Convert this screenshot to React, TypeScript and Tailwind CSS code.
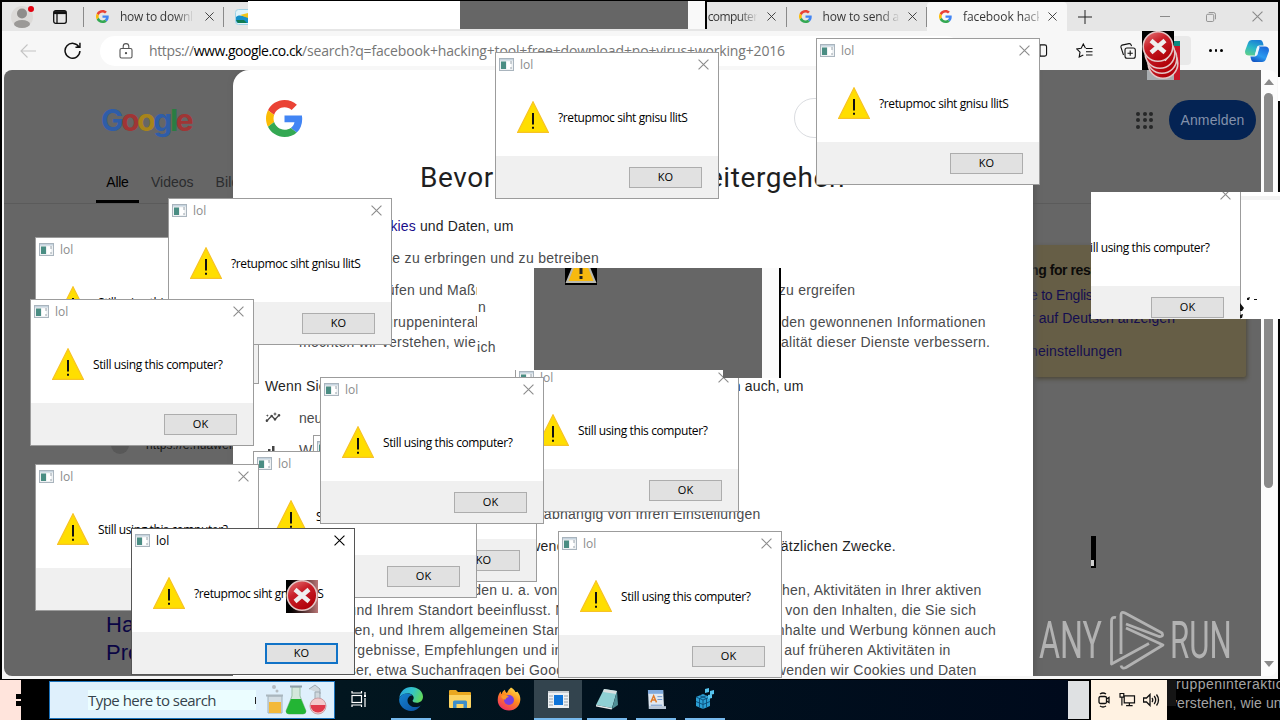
import { useLayoutEffect, useRef, type ReactNode } from 'react';
import clsx from 'clsx';

interface FitProps {
  w: number;
  className?: string;
  children: ReactNode;
}

// Spreads the letters so that a line takes exactly w pixels
function Fit({ w, className, children }: FitProps) {
  const ref = useRef<HTMLSpanElement>(null);

  useLayoutEffect(() => {
    const el = ref.current;
    if (!el) return;
    el.style.letterSpacing = '0px';
    const chars = (el.textContent || '').length || 1;
    el.style.letterSpacing = `${(w - el.offsetWidth) / chars}px`;
  }, [w]);

  return (
    <span ref={ref} className={clsx('inline-block shrink-0 whitespace-pre', className)}>
      {children}
    </span>
  );
}

function GoogleG({ className }: { className: string }) {
  return (
    <svg viewBox="0 0 48 48" className={clsx('shrink-0', className)}>
      <path fill="#EA4335" d="M24 9.5c3.54 0 6.71 1.22 9.21 3.6l6.85-6.85C35.9 2.38 30.47 0 24 0 14.62 0 6.51 5.38 2.56 13.22l7.98 6.19C12.43 13.72 17.74 9.5 24 9.5z" />
      <path fill="#4285F4" d="M46.98 24.55c0-1.57-.15-3.09-.38-4.55H24v9.02h12.94c-.58 2.96-2.26 5.48-4.78 7.18l7.73 6c4.51-4.18 7.09-10.36 7.09-17.65z" />
      <path fill="#FBBC05" d="M10.53 28.59c-.48-1.45-.76-2.99-.76-4.59s.27-3.14.76-4.59l-7.98-6.19C.92 16.46 0 20.12 0 24c0 3.88.92 7.54 2.56 10.78l7.97-6.19z" />
      <path fill="#34A853" d="M24 48c6.48 0 11.93-2.13 15.89-5.81l-7.73-6c-2.15 1.45-4.92 2.3-8.16 2.3-6.26 0-11.57-4.22-13.47-9.91l-7.98 6.19C6.51 42.62 14.62 48 24 48z" />
    </svg>
  );
}

function Cross({ className }: { className: string }) {
  return (
    <svg viewBox="0 0 10 10" className={clsx('shrink-0', className)} fill="none" stroke="currentColor">
      <path d="M0.5 0.5L9.5 9.5M9.5 0.5L0.5 9.5" />
    </svg>
  );
}

function ErrorIcon({ className }: { className?: string }) {
  return (
    <svg viewBox="0 0 32 32" className={clsx('h-8 w-8', className)}>
      <defs>
        <linearGradient id="err" x1="0" y1="0" x2="0.6" y2="1">
          <stop offset="0" stopColor="#e88080" />
          <stop offset="0.45" stopColor="#c9202a" />
          <stop offset="1" stopColor="#b00008" />
        </linearGradient>
      </defs>
      <circle cx="16" cy="15.5" r="14.8" fill="url(#err)" stroke="#e3c6c6" strokeWidth="1.6" />
      <path d="M9 9.500l14 12M23 9.500l-14 12" stroke="#efefef" strokeWidth="4.500" />
    </svg>
  );
}

function AppIcon() {
  return (
    <svg viewBox="0 0 15 13" className="mb-px h-[13px] w-[15px] shrink-0">
      <rect x="0.5" y="0.5" width="14" height="12" fill="#eef1f3" stroke="#a9b4bd" />
      <rect x="1" y="1" width="13" height="1.5" fill="#c5d3de" />
      <rect x="2" y="3.5" width="5" height="7.5" fill="#4a8d83" />
      <rect x="8" y="3.5" width="4" height="7.5" fill="#fff" />
      <path d="M12 3v3M12 9v2" stroke="#9aa5ad" />
    </svg>
  );
}

function WarnTriangle() {
  return (
    <svg viewBox="0 0 32 32" className="mb-[3px] h-8 w-8 shrink-0">
      <path d="M16 0.8L31.4 31.4H0.6z" fill="#ffde00" stroke="#f7c325" strokeWidth="1.2" />
      <path d="M16 12v11.5M16 25.7v2.1" stroke="#111" strokeWidth="2" />
    </svg>
  );
}

interface DialogProps {
  at: string;
  mirrored?: boolean;
  active?: boolean;
}

function Dialog({ at, mirrored, active }: DialogProps) {
  return (
    <div
      className={clsx(
        'absolute flex h-[147px] w-[224px] flex-col border bg-white font-["Open_Sans",sans-serif] text-[12px] text-black',
        active ? 'border-[#555]' : 'border-[#9c9c9c]',
        at,
      )}
    >
      <div className="flex h-[24px] shrink-0 items-center pl-[3px] pr-[9px]">
        <AppIcon />
        <Fit w={13} className={clsx('ml-[6px] leading-none', active ? 'text-black' : 'text-[#8c8c8c]')}>lol</Fit>
        <Cross className={clsx('mb-px ml-auto h-[11px] w-[11px]', active ? 'text-black' : 'text-[#8c8c8c]')} />
      </div>
      <div className="flex h-[79px] shrink-0 items-center pl-[21px] pt-[3px]">
        <WarnTriangle />
        <Fit w={130} className="ml-[9px] leading-none">
          {mirrored ? '?retupmoc siht gnisu llitS' : 'Still using this computer?'}
        </Fit>
      </div>
      <div className="flex flex-1 items-start justify-end bg-[#f0f0f0] pr-[16px] pt-[11px]">
        <div
          className={clsx(
            'flex h-[21px] w-[73px] items-center justify-center bg-[#e1e1e1] text-[11px]',
            active ? 'border-2 border-[#1173c7]' : 'border border-[#adadad]',
          )}
        >
          {mirrored ? 'KO' : 'OK'}
        </div>
      </div>
    </div>
  );
}

interface TabProps {
  title: string;
  w: number;
  active?: boolean;
}

function Tab({ title, w, active }: TabProps) {
  return (
    <div
      className={clsx(
        'flex h-[29px] w-[140.4px] shrink-0 items-center pl-[12px]',
        active ? 'rounded-t-[4px] bg-[#f7f7f7]' : 'bg-[#e6e6e6]',
      )}
    >
      <GoogleG className="h-[13px] w-[13px]" />
      <div className="ml-[11px] w-[76px] overflow-hidden">
        <Fit w={w} className="bg-linear-to-r from-[#333] from-75% to-[#dcdcdc] bg-clip-text leading-[20px] text-transparent">
          {title}
        </Fit>
      </div>
      <Cross className="ml-[9px] h-[9px] w-[9px] text-[#333]" />
      {!active && <div className="ml-auto h-[20px] w-px bg-[#8a8a8a]" />}
    </div>
  );
}

function TabStrip() {
  return (
    <div className="flex h-[29px] shrink-0 items-center bg-[#e6e6e6] text-[12px]">
      <svg viewBox="0 0 26 26" className="ml-[7px] h-[26px] w-[26px]">
        <circle cx="13" cy="13" r="11" fill="#dcdad8" />
        <circle cx="13" cy="9.5" r="5" fill="#8f8d8b" />
        <ellipse cx="13" cy="20" rx="8" ry="4" fill="#9b9997" />
        <circle cx="22" cy="5" r="3" fill="#e3000f" />
      </svg>
      <svg viewBox="0 0 14 14" className="ml-[18px] h-[14px] w-[14px]" fill="none" stroke="#111" strokeWidth="1.3">
        <rect x="0.7" y="0.7" width="12.6" height="12.6" rx="2" />
        <path d="M1 2.6h12" strokeWidth="3" />
        <path d="M4 3v10" />
      </svg>
      <div className="ml-[16px] h-[20px] w-px bg-[#8a8a8a]" />
      <Tab title="how to downl" w={73} />
      <div className="flex h-full w-[140.400px] shrink-0 items-center pl-[11px]">
        <svg viewBox="0 0 16 16" className="h-4 w-4">
          <rect x="0.5" y="0.5" width="17" height="15" rx="3" fill="#dff3fa" stroke="#9fd3e6" />
          <path d="M1 8c5-4 8 2 15-2v8H3c-2 0-2-3-2-6z" fill="#1590c8" />
          <path d="M5 6l8-2v5z" fill="#f0c419" />
          <path d="M1 11h8l3 3H3z" fill="#0f7c52" />
        </svg>
      </div>
      <div className="w-[281.400px] shrink-0" />
      <Tab title="your computer" w={75} />
      <Tab title="how to send a" w={77} />
      <Tab title="facebook hack" w={79} active />
      <svg viewBox="0 0 14 14" className="ml-[11px] h-[14px] w-[14px] shrink-0" stroke="#222">
        <path d="M7 0v14M0 7h14" />
      </svg>
      <div className="ml-auto flex shrink-0 items-center pr-[15px] text-[#8a8a8a]">
        <div className="h-px w-[10px] bg-[#8a8a8a]" />
        <svg viewBox="0 0 11 11" className="ml-[36px] h-[10px] w-[10px]" fill="none" stroke="currentColor">
          <rect x="0.5" y="2.5" width="8" height="8" rx="1.5" />
          <path d="M3 0.5h5a2.5 2.5 0 0 1 2.5 2.5v5" />
        </svg>
        <Cross className="ml-[36px] h-[11px] w-[11px]" />
      </div>
    </div>
  );
}

function Toolbar() {
  return (
    <div className="flex h-[39px] shrink-0 items-center bg-[#f7f7f7] text-[14px]">
      <svg viewBox="0 0 16 14" className="ml-[18px] h-[14px] w-[16px] shrink-0" fill="none" stroke="#c4c4c4" strokeWidth="1.1">
        <path d="M16 7H1M7.5 0.5L1 7l6.5 6.5" />
      </svg>
      <svg viewBox="0 0 16 16" className="ml-[28px] h-[17px] w-[17px] shrink-0" fill="none" stroke="#111" strokeWidth="1.4">
        <path d="M14.2 5A7 7 0 1 0 15 8.5M15 0.8V5h-4.2" />
      </svg>
      <div className="ml-[19px] flex h-[30px] w-[861px] shrink-0 items-center rounded-full bg-white pl-[19px] text-[#767676]">
        <svg viewBox="0 0 14 16" className="h-[16px] w-[14px]" fill="none" stroke="#555" strokeWidth="1.1">
          <rect x="1" y="5.5" width="12" height="9.5" rx="1.5" />
          <path d="M4.2 5.5V3.4a2.8 2.8 0 0 1 5.6 0v2.1" />
          <circle cx="7" cy="10.2" r="0.6" fill="#555" />
        </svg>
        <Fit w={45} className="ml-[16px]">https://</Fit>
        <Fit w={108} className="text-black">www.google.co.ck</Fit>
        <Fit w={483}>/search?q=facebook+hacking+tool+free+download+no+virus+working+2016</Fit>
      </div>
      <svg viewBox="0 0 16 16" className="ml-[71px] h-[15px] w-[16px] shrink-0" fill="none" stroke="#111" strokeWidth="1.2">
        <rect x="1" y="2" width="14" height="12" rx="2" />
        <path d="M8 2v12" />
      </svg>
      <svg viewBox="0 0 17 16" className="ml-[28px] h-[16px] w-[17px] shrink-0" fill="none" stroke="#111" strokeWidth="1.1">
        <path d="M9.5 5.2L7.3 1 5.2 5.2.7 5.9 4 9.2l-.8 4.9 4.1-2.2M10 5.5h6.5M10 8.8h6.5M10 12h6.5" />
      </svg>
      <svg viewBox="0 0 16 16" className="ml-[27px] h-[16px] w-[16px] shrink-0" fill="none" stroke="#111" strokeWidth="1.1">
        <rect x="5" y="5" width="10.3" height="10.3" rx="2" />
        <path d="M10.2 7.5v5.3M7.5 10.2h5.3M3.5 12L1 4.300a2 2 0 0 1 1-2.200L9 .6a2 2 0 0 1 2.200 1.500l.3 1" />
      </svg>
      <div className="ml-[22px] h-[29px] w-[33px] shrink-0 rounded-[4px] bg-[#e9e9e9]" />
      <div className="ml-[18px] flex gap-[3px]">
        <div className="h-[2.500px] w-[2.500px] rounded-full bg-black" />
        <div className="h-[2.500px] w-[2.500px] rounded-full bg-black" />
        <div className="h-[2.500px] w-[2.500px] rounded-full bg-black" />
      </div>
      <svg viewBox="0 0 24 22" className="ml-[22px] h-[22px] w-[24px] shrink-0">
        <defs>
          <linearGradient id="copL" x1="0.6" y1="0" x2="0.2" y2="1">
            <stop offset="0" stopColor="#1b7fd6" />
            <stop offset="0.5" stopColor="#2ab7c8" />
            <stop offset="1" stopColor="#5fcf8a" />
          </linearGradient>
          <linearGradient id="copR" x1="0.8" y1="0" x2="0.3" y2="1">
            <stop offset="0" stopColor="#1a66d8" />
            <stop offset="0.6" stopColor="#2b9bf0" />
            <stop offset="1" stopColor="#1357c4" />
          </linearGradient>
        </defs>
        <path d="M7 0h8c2 0 2.600 1.500 3 3l.6 2.500h-4c-2 0-2.600 1-3 3L10 15.500H4c-3 0-4.500-2-3.800-5L3 3c.7-2 2-3 4-3z" fill="url(#copL)" />
        <path d="M17 22H9c-2 0-2.600-1.500-3-3l-.6-2.500h4c2 0 2.600-1 3-3L14 6.500h6c3 0 4.500 2 3.800 5L21 19c-.7 2-2 3-4 3z" fill="url(#copR)" />
        <path d="M13.500 7l-2.500 8" stroke="#eef8ff" strokeWidth="2.500" />
      </svg>
    </div>
  );
}

function ResultsPage() {
  return (
    <div className='flex w-[1257px] shrink-0 flex-col bg-[#666] font-["Liberation_Sans",sans-serif] text-[14px]'>
      <div className="flex h-[100px] shrink-0 items-center">
        <Fit w={90} className='ml-[97px] font-["Inter",sans-serif] text-[30px] font-bold leading-none'>
          <span className="text-[#2f5da8]">G</span>
          <span className="text-[#a03535]">o</span>
          <span className="text-[#a8841a]">o</span>
          <span className="text-[#2f5da8]">g</span>
          <span className="text-[#2a7d42]">l</span>
          <span className="text-[#a03535]">e</span>
        </Fit>
        <div className="ml-auto grid grid-cols-3 gap-[2.500px]">
          {Array.from({ length: 9 }, (_, i) => (
            <div key={i} className="h-[4px] w-[4px] rounded-full bg-[#262728]" />
          ))}
        </div>
        <div className="ml-[16px] mr-[5px] flex h-[40px] w-[87px] items-center justify-center rounded-full bg-[#042353] text-[#8391ab]">
          <Fit w={64}>Anmelden</Fit>
        </div>
      </div>
      <div className="flex h-[34px] shrink-0 items-end border-b border-[#5b5b5b] pl-[92px]">
        <div className="flex h-[33px] w-[43px] items-start justify-center border-b-3 border-black pt-[2px] text-black">
          <Fit w={22}>Alle</Fit>
        </div>
        <div className="ml-[12px] flex h-[33px] items-start gap-[22px] pt-[2px] text-[#2b2c2e]">
          <Fit w={43}>Videos</Fit>
          <Fit w={37}>Bilder</Fit>
        </div>
      </div>
      <div className="flex flex-1 overflow-hidden">
        <div className="flex w-[1029px] flex-col">
          <div className="mt-[232px] flex items-center gap-[17px] pl-[107px] text-[12px] text-[#141414]">
            <div className="h-[18px] w-[18px] rounded-full bg-[#585858]" />
            <Fit w={112} className="leading-[18px]">https://e.huawei.com</Fit>
          </div>
          <div className="mt-[157px] pl-[102px] text-[22px] leading-[28px] text-[#0a0544]">
            <div>Hacking Tools</div>
            <div>Programme</div>
          </div>
        </div>
        <div className="mt-[41px] h-[132px] w-[213px] overflow-hidden whitespace-nowrap rounded-[2px] bg-[#665e46] pt-[15px] text-[#140e50] shadow-[1px_2px_4px_#4c4738]">
          <Fit w={158} className="-ml-[3px] font-bold leading-[20px] text-[#0c0b0a]">ng for results in English?</Fit>
          <div className="mt-[4px] leading-[20px]"><Fit w={70} className="-ml-[3px]">e to English</Fit></div>
          <div className="mt-[3px] leading-[20px]"><Fit w={145} className="-ml-[3px]">r auf Deutsch anzeigen</Fit></div>
          <div className="mt-[13px] leading-[20px]"><Fit w={92} className="-ml-[3px]">heinstellungen</Fit></div>
        </div>
      </div>
    </div>
  );
}

const finePrint = [
  { w: 717, text: 'Nicht personalisierte Inhalte werden u. a. von Inhalten, die Sie sich gerade ansehen, Aktivitäten in Ihrer aktiven' },
  { w: 711, text: 'Suchsitzung und Ihrem Standort beeinflusst. Nicht personalisierte Werbung wird von den Inhalten, die Sie sich' },
  { w: 731, text: 'gerade ansehen, und Ihrem allgemeinen Standort beeinflusst. Personalisierte Inhalte und Werbung können auch' },
  { w: 686, text: 'relevantere Ergebnisse, Empfehlungen und individuelle Werbung enthalten, die auf früheren Aktivitäten in' },
  { w: 712, text: 'diesem Browser, etwa Suchanfragen bei Google, basieren. Soweit relevant, verwenden wir Cookies und Daten' },
];

function ConsentDialog() {
  return (
    <div className='absolute left-[229px] top-0 flex h-[606px] w-[800px] flex-col overflow-hidden rounded-tl-[16px] bg-white px-[32px] pt-[28px] font-["Liberation_Sans",sans-serif] text-[14px] leading-[20px] text-[#4a4b4d] shadow-[2px_0_6px_#555]'>
      <div className="flex h-[40px] shrink-0 items-center justify-between">
        <GoogleG className="ml-[1px] h-[37px] w-[37px]" />
        <div className="mr-[54px] h-[40px] w-[153px] rounded-full border border-[#dadce0]" />
      </div>
      <div className='mt-[20px] flex h-[40px] shrink-0 items-center pl-[155px] font-["Roboto",sans-serif] text-[28px] text-[#1f1f1f]'>
        <Fit w={425}>Bevor Sie zu Google weitergehen</Fit>
      </div>
      <div className="mt-[18px] h-[20px] shrink-0 text-[#1f1f1f]">
        <Fit w={249}>Wir verwenden <span className="text-[#1a0d8b]">Cookies</span> und Daten, um</Fit>
      </div>
      <div className="mt-[12px] flex shrink-0 flex-col items-start gap-[12px] pl-[34px]">
        <Fit w={300}>Google-Dienste zu erbringen und zu betreiben</Fit>
        <Fit w={556}>Ausfälle zu prüfen und Maßnahmen gegen Spam, Betrug oder Missbrauch zu ergreifen</Fit>
        <div className="flex flex-col items-start">
          <Fit w={687}>Daten zu Zielgruppeninteraktionen und Websitestatistiken zu erheben. Mit den gewonnenen Informationen</Fit>
          <Fit w={691}>möchten wir verstehen, wie unsere Dienste verwendet werden, und die Qualität dieser Dienste verbessern.</Fit>
        </div>
      </div>
      <div className="mt-[24px] h-[20px] shrink-0 text-[#1f1f1f]">
        <Fit w={539}>Wenn Sie „Alle akzeptieren“ auswählen, verwenden wir Cookies und Daten auch, um</Fit>
      </div>
      <div className="mt-[12px] flex shrink-0 flex-col gap-[12px]">
        <div className="flex h-[20px] items-center">
          <svg viewBox="0 0 24 24" className="mr-[18px] h-[16px] w-[16px] shrink-0" fill="#444">
            <path d="M21 6c-1.450 0-2.260 1.440-1.930 2.510l-3.550 3.560c-.3-.09-.74-.09-1.040 0l-2.550-2.550C12.270 8.450 11.460 7 10 7c-1.450 0-2.270 1.440-1.930 2.520l-4.560 4.550C2.440 13.740 1 14.550 1 16c0 1.100.9 2 2 2 1.450 0 2.260-1.440 1.930-2.510l4.550-4.560c.3.09.74.09 1.040 0l2.550 2.550C12.730 14.550 13.540 16 15 16c1.450 0 2.270-1.440 1.930-2.520l3.560-3.550C21.560 10.260 23 9.450 23 8c0-1.100-.9-2-2-2z" />
            <path d="M15 9l.94-2.070L18 6l-2.060-.93L15 3l-.92 2.070L12 6l2.080.93zM3.500 11L4 9l2-.5L4 8l-.5-2L3 8l-2 .5L3 9z" />
          </svg>
          <Fit w={290}>neue Dienste zu entwickeln und zu verbessern</Fit>
        </div>
        <div className="flex h-[20px] items-center">
          <svg viewBox="0 0 16 16" className="mr-[18px] h-[16px] w-[16px] shrink-0" fill="#444">
            <path d="M3 7h2.500v7H3zM7 4h2.500v10H7zM11 10h2.500v4H11z" />
          </svg>
          <Fit w={350}>Wirksamkeit von Werbung zu messen und zu verbessern</Fit>
        </div>
        <div className="h-[20px]" />
        <div className="pl-[34px]"><Fit w={462}>personalisierte Werbung anzuzeigen, abhängig von Ihren Einstellungen</Fit></div>
      </div>
      <div className="mt-[12px] h-[20px] shrink-0 text-[#1f1f1f]">
        <Fit w={631}>Wenn Sie „Alle ablehnen“ auswählen, verwenden wir Cookies nicht für diese zusätzlichen Zwecke.</Fit>
      </div>
      <div className="mt-[24px] flex shrink-0 flex-col items-start">
        {finePrint.map((line) => (
          <Fit key={line.w} w={line.w}>{line.text}</Fit>
        ))}
      </div>
    </div>
  );
}

function Scrollbar() {
  return (
    <div className="flex w-[16px] shrink-0 flex-col items-start bg-[#fcfcfc] pl-[3px] pt-[9px]">
      <div className="h-0 w-0 border-x-5 border-b-6 border-x-transparent border-b-[#8a8a8a]" />
      <div className="mt-[8px] h-[395px] w-[9px] rounded-full bg-[#8a8a8a]" />
      <div className="mt-[173px] h-0 w-0 border-x-5 border-t-6 border-x-transparent border-t-[#8a8a8a]" />
    </div>
  );
}

function Browser() {
  return (
    <div className='ml-[2px] mt-[2px] flex h-[677px] w-[1276px] shrink-0 flex-col bg-[#f7f7f7] font-["Open_Sans",sans-serif]'>
      <TabStrip />
      <Toolbar />
      <div className="relative ml-[2px] flex h-[606px] w-[1273px] shrink-0 overflow-hidden rounded-[8px]">
        <ResultsPage />
        <ConsentDialog />
        <Scrollbar />
      </div>
    </div>
  );
}

function Slot({ children, open, current }: { children: ReactNode; open?: boolean; current?: boolean }) {
  return (
    <div
      className={clsx(
        'flex h-[40px] w-[48px] shrink-0 items-center justify-center border-b-2',
        current && 'bg-[#33444e]',
        open ? 'border-[#76b9ed]' : 'border-transparent',
      )}
    >
      {children}
    </div>
  );
}

function Taskbar() {
  return (
    <div className='mt-[1px] flex h-[40px] shrink-0 font-["Open_Sans",sans-serif]'>
      <div className="flex w-[21px] shrink-0 flex-col items-end justify-center gap-[2px] bg-[#ffe4dc]">
        <div className="h-[5px] w-[5px] bg-black" />
        <div className="h-[5px] w-[5px] bg-black" />
      </div>
      <div className="my-[1px] ml-[28px] flex w-[286px] shrink-0 items-center border border-[#1c74bd] bg-[#dff0fc] pl-[38px]">
        <div className="flex h-[20px] w-[168px] items-center justify-between bg-[#ebfdff] text-[15px] leading-none text-[#35434c]">
          <Fit w={128}>Type here to search</Fit>
          <div className="h-[7px] w-px bg-[#222]" />
        </div>
        <svg viewBox="0 0 62 32" className="ml-[9px] h-[32px] w-[62px]">
          <path d="M3 12h14v17H3z" fill="#d3dde3" stroke="#9fb0ba" />
          <path d="M4 18h12v11H4z" fill="#f3b93a" />
          <path d="M1 11.500h17" stroke="#aab7bf" strokeWidth="2" />
          <circle cx="9" cy="3" r="2" fill="#b5bcc2" />
          <circle cx="12" cy="7" r="1.500" fill="#b5bcc2" />
          <path d="M27 3h8v9l6 15q0 3-3 3H24q-3 0-3-3l6-15z" fill="#d4e8dc" stroke="#9bbfa8" />
          <path d="M26 15h10l5 12q0 3-3 3H24q-3 0-3-3z" fill="#23b534" />
          <path d="M25 2.500h12" stroke="#8f9fa8" strokeWidth="2" />
          <path d="M50 8h5v9h-5zM44 5l6-4 5 4v5" fill="#cfd8dd" stroke="#9fabb3" />
          <circle cx="53" cy="22" r="8" fill="#f3c9cc" stroke="#c9a0a4" />
          <path d="M45.500 21h15a7.500 7.500 0 0 1-15 0z" fill="#e0394b" />
        </svg>
      </div>
      <div className="flex w-[733px] shrink-0 bg-linear-to-r from-[#02161f] to-[#000a1c]">
        <Slot>
          <svg viewBox="0 0 16 16" className="h-[16px] w-[16px]" fill="none" stroke="#fff" strokeWidth="1.200">
            <rect x="1" y="4.500" width="9.500" height="7" />
            <path d="M1 0v2h9.500V0M1 16v-2h9.500v2M14 1v3M14 7v9" />
            <path d="M13 5h2" strokeWidth="2" />
          </svg>
        </Slot>
        <div className="ml-[8px] flex w-[40px] items-center justify-center border-b-2 border-[#76b9ed]">
          <svg viewBox="0 0 24 24" className="h-[24px] w-[24px]">
            <defs>
              <linearGradient id="edgeTop" x1="0" y1="0.300" x2="1" y2="0.600">
                <stop offset="0" stopColor="#2aa7e0" />
                <stop offset="0.500" stopColor="#33c3c8" />
                <stop offset="1" stopColor="#63d957" />
              </linearGradient>
              <linearGradient id="edgeLow" x1="0" y1="0" x2="1" y2="1">
                <stop offset="0" stopColor="#1583d0" />
                <stop offset="1" stopColor="#0b4fa0" />
              </linearGradient>
            </defs>
            <path d="M0.300 11C1 4.500 6 0 12.200 0 18.800 0 24 4.300 24 9.800c0 3.700-2.800 6-6.200 6-2.600 0-4.200-1-4.200-2 0-.7 1.100-1.100 1.100-3 0-2.300-2.500-4.300-5.900-4.300C4.700 6.500 1.500 8.500.3 11z" fill="url(#edgeTop)" />
            <path d="M0.200 12C1 8.500 4.500 6.500 8.500 6.500c2 0 3.800.8 4.900 2-2.500-.2-4.900 1.900-4.900 5 0 4 3.600 6.600 7.600 6.600 2.400 0 4-.8 5.600-1.700C19.500 21.800 16 24 12 24 5.400 24-.5 18.500.2 12z" fill="url(#edgeLow)" />
          </svg>
        </div>
        <div className="ml-[5px]">
          <Slot>
            <svg viewBox="0 0 22 18" className="h-[18px] w-[22px]">
              <path d="M0 1q0-1 1-1h6l2 2h12q1 0 1 1v14H0z" fill="#e9a820" />
              <path d="M0 5h22v12q0 1-1 1H1q-1 0-1-1z" fill="#fcd462" />
              <path d="M4 18v-6q0-1.500 1.500-1.500h11Q18 10.500 18 12v6h-3.500v-4h-7v4z" fill="#3d8ec9" />
            </svg>
          </Slot>
        </div>
        <div className="ml-px">
          <Slot>
            <svg viewBox="0 0 24 24" className="h-[24px] w-[24px]">
              <defs>
                <linearGradient id="fox" x1="0.800" y1="0" x2="0.200" y2="1">
                  <stop offset="0" stopColor="#ffe14a" />
                  <stop offset="0.450" stopColor="#ff8a1e" />
                  <stop offset="1" stopColor="#f0286a" />
                </linearGradient>
              </defs>
              <path d="M14 .5c3 1.500 4 3.500 4.300 4.500 1 .3 1.500 0 2-.5 2.500 3 3.200 5.500 3 8.500-.5 6-5 10.500-11.300 10.500S.7 19 .7 13c0-4 1.300-6.500 3-8.500 0 1 .3 1.800.8 2.500C5.500 5 6.500 3.500 8 2.800c0 1.500.8 2.700 2 3.200C11 4 12 2 14 .5z" fill="url(#fox)" />
              <circle cx="12" cy="13" r="5" fill="#7a3fe0" />
              <path d="M4 9c3-2 6-1 8 1-2 0-3 1-3.500 2.500C6.500 13 4.500 11.500 4 9z" fill="#ff9a26" />
            </svg>
          </Slot>
        </div>
        <div className="ml-px">
          <Slot open current>
            <svg viewBox="0 0 21 17" className="h-[17px] w-[21px]">
              <rect width="21" height="17" fill="#eef1f3" />
              <rect width="21" height="2" fill="#c9ced2" />
              <path d="M1 5h4M1 8h4M1 11h4M1 14h4M16 5h4M16 8h4M16 11h4M16 14h4" stroke="#9aa3aa" />
              <rect x="6" y="4" width="9" height="10" fill="#0f74d8" />
            </svg>
          </Slot>
        </div>
        <div className="ml-[5px] flex w-[40px] items-center justify-center border-b-2 border-[#76b9ed]">
          <svg viewBox="0 0 22 22" className="h-[22px] w-[22px]">
            <path d="M8 1l13 2-5 17L0 17z" fill="#8fd0d4" />
            <path d="M8 1l13 2-.8 3L7 4z" fill="#d9dfe0" />
            <path d="M0 17l16 3-.3 1.500L0 18.500z" fill="#e8eced" />
            <path d="M21 3l1 14-6 4z" fill="#4f8f96" />
          </svg>
        </div>
        <div className="ml-[9px] flex w-[40px] items-center justify-center border-b-2 border-[#76b9ed]">
          <svg viewBox="0 0 20 22" className="h-[21px] w-[19px]">
            <path d="M1 1h16l1 20H2z" fill="#dfe8f2" />
            <path d="M1 1h16v4H1z" fill="#7fa9dc" />
            <path d="M4 14l3-7 3 7M5 11.500h4" stroke="#e07a28" strokeWidth="1.500" fill="none" />
            <path d="M11 8h5M11 11h5M4 17h12" stroke="#6a92c8" />
            <path d="M2 18h18v3H2z" fill="#b9c7d8" />
          </svg>
        </div>
        <div className="ml-[9px] flex w-[40px] items-center justify-center border-b-2 border-[#76b9ed]">
          <svg viewBox="0 0 20 22" className="h-[22px] w-[20px]">
            <path d="M1 9l7-3 7 3v9l-7 3-7-3z" fill="#2b9fd4" />
            <path d="M1 9l7 3 7-3M8 12v9M1 13.500l7 3 7-3M4.500 7.500l7 3v9M11.500 7.500l-7 3v9" stroke="#0b4d78" strokeWidth="0.900" fill="none" />
            <path d="M10 1l4-1v4l-4 1zM15 3l4-1v4l-4 1zM13 7l4-1v4l-4 1z" fill="#56c4ee" />
          </svg>
        </div>
      </div>
      <div className="my-[1px] w-[21px] shrink-0 bg-[#dfe1e3]" />
      <div className="ml-[2px] flex w-[76px] shrink-0 items-center bg-[#fff2e2] pl-[7px]">
        <svg viewBox="0 0 12 16" className="h-[16px] w-[12px]" fill="none" stroke="#111" strokeWidth="1.300">
          <rect x="1" y="4.500" width="7.500" height="7" rx="1.500" />
          <path d="M8.500 7l2.500-1.500v5L8.500 9M2 2q3-2 6 0M2 14q3 2 6 0" />
        </svg>
        <svg viewBox="0 0 17 15" className="ml-[9px] h-[14px] w-[17px]" fill="none" stroke="#111" strokeWidth="1.300">
          <path d="M5 3h11v7.500H5zM10.500 10.500V13M7 13.500h7M.5.500h4v4h-4zM2.500 4.500v9" />
        </svg>
        <svg viewBox="0 0 17 14" className="ml-[7px] h-[14px] w-[17px]" fill="none" stroke="#111" strokeWidth="1.300">
          <path d="M.5 5h3l3.500-3.500v11L3.500 9H.5zM9 5q1.500 2 0 4M11.200 3q3 4 0 8M13.500 1.500q4 5.500 0 11" />
        </svg>
      </div>
      <div className="h-[26px] w-[9px] shrink-0 bg-[#151515]" />
      <div className='flex flex-col items-start overflow-hidden font-["Liberation_Sans",sans-serif] text-[14px] leading-[19px] text-[#a4a4a4]'>
        <Fit w={116} className="-mt-[5px]">ruppeninteraktion</Fit>
        <Fit w={112} className="-ml-[6px]">verstehen, wie un</Fit>
      </div>
    </div>
  );
}

function Watermark() {
  return (
    <div className='absolute left-[1039px] top-[609px] flex h-[64px] w-[194px] items-center font-["Roboto",sans-serif] text-[52px] leading-none text-[#b2b2b2]'>
      <div className="w-[68px]"><div className="w-[100px] origin-left scale-x-[0.620]">ANY</div></div>
      <svg viewBox="0 0 58 62" className="h-[62px] w-[58px] shrink-0" fill="none" stroke="#b2b2b2" strokeWidth="2.800" strokeLinejoin="round">
        <path d="M9 7.500Q4.500 6.500 4.500 11v43L42 33.500" />
        <path d="M14 44V5q0-4 4-2l37 20q2 4-3 3.500L19 14" />
        <path d="M19 18l37 17L19 57.500q-4 2-5-2" />
      </svg>
      <div className="ml-[5px] w-[62px]"><div className="w-[105px] origin-left scale-x-[0.600]">RUN</div></div>
    </div>
  );
}

// Pieces of the screen that were copied and never repainted
function Smears() {
  return (
    <>
      <div className="absolute left-[248px] top-[1px] flex h-[28px] w-[459px]">
        <div className="w-[212px] bg-white" />
        <div className="w-[228px] bg-[#666]" />
        <div className="w-[17px] bg-[#f9f9f9]" />
        <div className="w-[2px] bg-black" />
      </div>
      <div className="absolute left-[477px] top-[268px] flex h-[102px] w-[304px]">
        <div className='w-[57px] bg-white font-["Liberation_Sans",sans-serif] text-[14px] text-[#4a4b4d]'>
          <div className="mt-[31px] h-[16px] pl-px leading-[16px]">n</div>
          <div className="mt-[22px] h-[20px] leading-[20px]"><Fit w={19}>ich</Fit></div>
        </div>
        <div className="w-[228px] bg-[#666]">
          <div className="ml-[31px] h-[17px] w-[32px] overflow-hidden bg-black">
            <svg viewBox="0 0 32 17" className="h-[17px] w-[32px]">
              <path d="M11-8h10L30 14H2z" fill="#f7b90f" stroke="#b9b9b0" strokeWidth="2" />
              <path d="M16-4v10M16 8v3" stroke="#222" strokeWidth="3" />
            </svg>
          </div>
        </div>
        <div className="w-[17px] bg-[#fbfbfb]" />
        <div className="w-[2px] bg-black" />
      </div>
      <div className="absolute left-[723px] top-[370px] flex h-[8px] w-[58px]">
        <div className="w-[39px] bg-[#666]" />
        <div className="w-[17px] bg-[#fbfbfb]" />
        <div className="w-[2px] bg-black" />
      </div>
      <div className="absolute left-[1091px] top-[536px] flex h-[32px] w-[5px] items-end bg-black">
        <div className="mb-[2px] h-[6px] w-[3px] bg-[#cfcfcf]" />
      </div>
      <div className="absolute left-[1091px] top-[192px] h-[127px] w-[189px] overflow-hidden bg-white">
        <div className="mt-[4px] h-[4px] bg-[#f3f3f3]" />
        <Dialog at="-left-[74px] -top-[10px]" />
        <svg viewBox="0 0 20 24" className="absolute left-[149px] top-[103px] h-[24px] w-[20px]">
          <path d="M0 8l4 5-2 3H0zM0 20l3-1-1 4H0zM7 3l3-1-1 3H7zM14 4h3v1h-3z" fill="#111" />
        </svg>
      </div>
      <div className="absolute left-[1278px] top-[77px] h-[24px] w-[2px] bg-white" />
    </>
  );
}

function ErrorPile() {
  return (
    <div className="absolute left-[1142px] top-[31px] h-[49px] w-[38px]">
      <div className="absolute left-[5px] top-[10px] flex h-[39px] w-[33px] flex-col bg-[#a9aeb1]">
        <div className="h-[5px] bg-[#0c8a82]" />
        <div className="ml-auto w-[6px] flex-1 bg-[#c81828]" />
      </div>
      <div className="absolute left-0 top-0 h-[39px] w-[32px] bg-black" />
      <ErrorIcon className="absolute left-[5px] top-[17px]" />
      <ErrorIcon className="absolute left-[4px] top-[12px]" />
      <ErrorIcon className="absolute left-[2px] top-[7px]" />
      <ErrorIcon className="absolute left-0 top-0" />
    </div>
  );
}

function App() {
  return (
    <div className="relative flex h-[720px] w-[1280px] flex-col overflow-hidden bg-black">
      <Browser />
      <Taskbar />
      <Watermark />
      <Dialog at="left-[515px] top-[365px]" />
      <Smears />
      <Dialog at="left-[495px] top-[52px]" mirrored />
      <Dialog at="left-[816px] top-[38px]" mirrored />
      <Dialog at="left-[35px] top-[237px]" />
      <Dialog at="left-[168px] top-[198px]" mirrored />
      <Dialog at="left-[30px] top-[299px]" />
      <Dialog at="left-[313px] top-[435px]" mirrored />
      <Dialog at="left-[253px] top-[451px]" />
      <Dialog at="left-[320px] top-[377px]" />
      <Dialog at="left-[35px] top-[464px]" />
      <Dialog at="left-[558px] top-[531px]" />
      <Dialog at="left-[131px] top-[528px]" mirrored active />
      <ErrorPile />
      <div className="absolute left-[286px] top-[580px] h-[33px] w-[32px] bg-linear-to-r from-black to-[#b77]">
        <ErrorIcon />
      </div>
    </div>
  );
}

export default App;
